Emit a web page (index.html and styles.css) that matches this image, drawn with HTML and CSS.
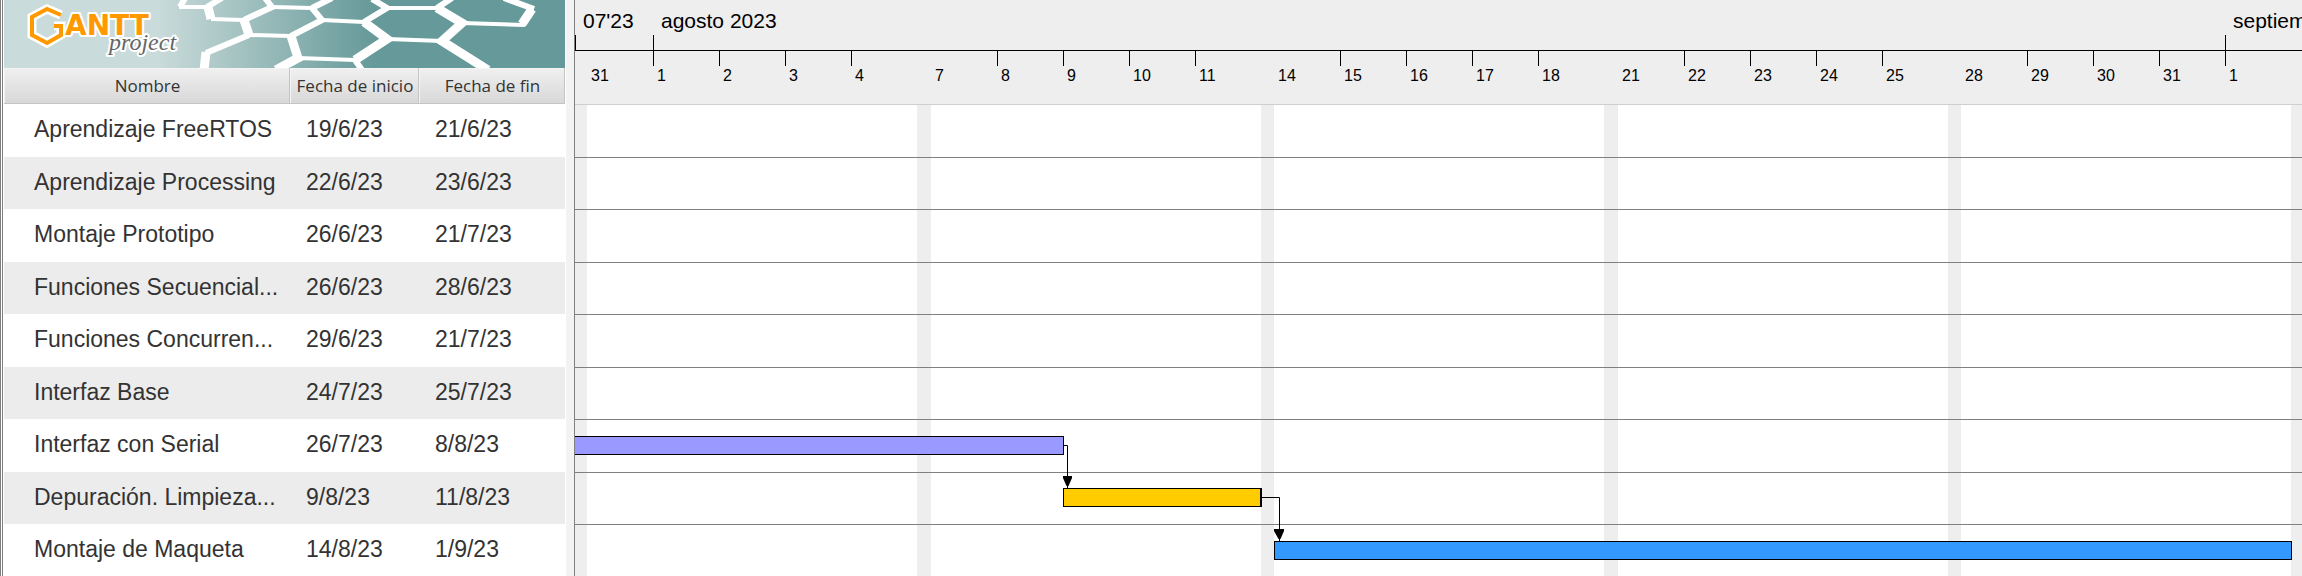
FILE: index.html
```html
<!DOCTYPE html>
<html lang="es">
<head>
<meta charset="utf-8">
<meta name="viewport" content="width=device-width, initial-scale=1">
<title>GanttProject</title>
<link rel="stylesheet" href="styles.css">
</head>
<body>
<main class="app">
  <section class="tasks">
    <svg class="banner" viewBox="4 0 561 68" preserveAspectRatio="xMinYMin slice" role="img" aria-label="GanttProject">
      <defs>
        <linearGradient id="sea" gradientUnits="userSpaceOnUse" x1="158" y1="0" x2="375" y2="0">
          <stop offset="0" stop-color="#c9dbda"/>
          <stop offset="1" stop-color="#669999"/>
        </linearGradient>
      </defs>
      <rect x="4" width="561" height="68" fill="url(#sea)"/>
      <g class="comb">
        <path class="comb-thin" d="M179 7H208M211 19L244 20M272 7L312 8M322 20L364 22M249 35L291 36M298 58L355 60M387 8H437M387 39L442 41M462 23L525 25"/>
        <path class="comb-mid" d="M185 -2L180 7M207 7L222 -2M244 20L272 7L265 -2M312 8L332 -2M291 36L322 20L312 8M206 53L249 35M355 60L362 70M372 -1L387 8L364 22M437 8L452 -2M534 9L504 -2"/>
        <path class="comb-thick" d="M208 7L211 19M244 20L249 35M206 52L204 70M291 36L298 58L276 70M355 60L387 39L364 22M437 8L462 23L442 41L488 70M522 24L532 9"/>
      </g>
      <path class="mark-halo" d="M61 15L47 9L32 17V35L47 43L61 35V26H54"/>
      <text class="brand" x="65" y="35">ANTT</text>
      <path class="mark" d="M61 15L47 9L32 17V35L47 43L61 35V26H54"/>
      <text class="brand-sub" x="109" y="50">project</text>
    </svg>
    <table class="grid">
      <colgroup><col class="col-name"><col class="col-start"><col class="col-end"></colgroup>
      <thead>
        <tr><th scope="col">Nombre</th><th scope="col">Fecha de inicio</th><th scope="col">Fecha de fin</th></tr>
      </thead>
      <tbody>
        <tr><td>Aprendizaje FreeRTOS</td><td>19/6/23</td><td>21/6/23</td></tr>
        <tr><td>Aprendizaje Processing</td><td>22/6/23</td><td>23/6/23</td></tr>
        <tr><td>Montaje Prototipo</td><td>26/6/23</td><td>21/7/23</td></tr>
        <tr><td>Funciones Secuencial...</td><td>26/6/23</td><td>28/6/23</td></tr>
        <tr><td>Funciones Concurren...</td><td>29/6/23</td><td>21/7/23</td></tr>
        <tr><td>Interfaz Base</td><td>24/7/23</td><td>25/7/23</td></tr>
        <tr><td>Interfaz con Serial</td><td>26/7/23</td><td>8/8/23</td></tr>
        <tr><td>Depuración. Limpieza...</td><td>9/8/23</td><td>11/8/23</td></tr>
        <tr><td>Montaje de Maqueta</td><td>14/8/23</td><td>1/9/23</td></tr>
      </tbody>
    </table>
  </section>
  <div class="splitter"></div>
  <section class="timeline">
    <header class="scale">
      <div class="months">
        <div class="month month-july"><span class="month-name">07'23</span><i class="month-tick"></i></div>
        <div class="month month-august"><span class="month-name">agosto 2023</span><i class="month-tick"></i></div>
        <div class="month"><span class="month-name">septiembre 2023</span><i class="month-tick"></i></div>
      </div>
      <div class="days">
        <span class="off off-first"></span>
        <span class="day monday">31</span><span class="day">1</span><span class="day">2</span><span class="day">3</span><span class="day">4</span>
        <span class="off off-long"></span>
        <span class="day monday">7</span><span class="day">8</span><span class="day">9</span><span class="day">10</span><span class="day">11</span>
        <span class="off"></span>
        <span class="day monday">14</span><span class="day">15</span><span class="day">16</span><span class="day">17</span><span class="day">18</span>
        <span class="off off-long"></span>
        <span class="day monday">21</span><span class="day">22</span><span class="day">23</span><span class="day">24</span><span class="day">25</span>
        <span class="off"></span>
        <span class="day monday">28</span><span class="day">29</span><span class="day">30</span><span class="day">31</span><span class="day">1</span>
      </div>
    </header>
    <div class="chart">
      <div class="weekends">
        <span class="off off-first"></span><span class="week"></span>
        <span class="off off-long"></span><span class="week"></span>
        <span class="off"></span><span class="week"></span>
        <span class="off off-long"></span><span class="week"></span>
        <span class="off"></span><span class="week"></span>
        <span class="off off-long"></span>
      </div>
      <div class="lanes">
        <div class="lane"></div>
        <div class="lane"></div>
        <div class="lane"></div>
        <div class="lane"></div>
        <div class="lane"></div>
        <div class="lane"></div>
        <div class="lane"><div class="bar bar-violet"></div></div>
        <div class="lane"><div class="bar bar-amber"></div></div>
        <div class="lane"><div class="bar bar-blue"></div></div>
      </div>
      <svg class="links" width="1727" height="473" viewBox="0 0 1727 473" aria-hidden="true">
        <path class="link" d="M489 341.500H492.500V384M687 393.500H704.500V437"/>
        <path class="arrow" d="M488 372H497V374L493.500 382H491.500L488 374ZM699 425H709V427L705.500 435H703.500L699 427Z"/>
      </svg>
    </div>
  </section>
</main>
</body>
</html>
```

FILE: styles.css
```css
* {
  box-sizing: border-box;
}

body {
  margin: 0;
  background: #fff;
  font-family: "Liberation Sans", Arial, sans-serif;
}

.app {
  display: flex;
  height: 100vh;
  overflow: hidden;
}

/* Task list */
.tasks {
  flex: none;
  width: 566px;
  padding: 0 1px;
  border-left: 3px double #808080;
}

.banner {
  display: block;
  width: 100%;
  height: 68px;
}

.comb {
  fill: none;
  stroke: #fff;
}

.comb-thin {
  stroke-width: 4;
}

.comb-mid {
  stroke-width: 6;
}

.comb-thick {
  stroke-width: 9;
}

.mark,
.mark-halo {
  fill: none;
  stroke: #f90;
  stroke-width: 4;
}

.mark-halo {
  stroke: #fff;
  stroke-width: 9;
}

.brand,
.brand-sub {
  paint-order: stroke;
  stroke: #fff;
  stroke-width: 4px;
  stroke-linejoin: round;
}

.brand {
  fill: #f90;
  font: bold 28px "DejaVu Sans", sans-serif;
}

.brand-sub {
  fill: #666;
  font: italic 24px "Liberation Serif", serif;
}

.grid {
  width: 100%;
  table-layout: fixed;
  border-collapse: separate;
  border-spacing: 0;
  color: #333;
}

.col-name {
  width: 286px;
}

.col-start {
  width: 129px;
}

.grid th {
  height: 36px;
  padding: 1px 0 0 2px;
  border: 1px solid #c4c4c4;
  border-width: 0 1px 1px 0;
  background: linear-gradient(#f0f0f0, #d8d8d8);
  box-shadow: inset 1px 1px #f4f4f4;
  font: 17px/34px "Open Sans", sans-serif;
  white-space: nowrap;
}

.grid td {
  height: 53px;
  padding: 0 0 3px 16px;
  font-size: 23px;
  line-height: 26px;
  white-space: nowrap;
}

.grid td:first-child {
  padding-left: 30px;
}

.grid tbody tr:nth-child(even) td {
  height: 52px;
  background: #ececec;
}

.splitter {
  flex: none;
  width: 9px;
  border-right: 1px solid #808080;
  background: #f3f3f3;
}

/* Timeline */
.timeline {
  flex: 1;
  min-width: 0;
  overflow: hidden;
}

.scale {
  height: 104px;
  background: #eee;
  color: #000;
}

.months {
  display: flex;
  height: 50px;
}

.month {
  flex: none;
  display: flex;
  flex-direction: column;
}

.month-july {
  width: 78px;
}

.month-august {
  width: 1572px;
}

.month-name {
  height: 35px;
  padding: 6px 0 0 8px;
  font-size: 21px;
  line-height: 29px;
  white-space: nowrap;
}

.month-tick {
  height: 15px;
  border-left: 1px solid #000;
}

.days {
  display: flex;
  border-top: 1px solid #000;
}

.day {
  flex: none;
  width: 66px;
  padding: 14px 0 0 4px;
  background: linear-gradient(#000, #000) 0 0 / 1px 15px no-repeat;
  font-size: 16px;
  line-height: 22px;
}

.monday {
  background: none;
}

.off {
  flex: none;
  width: 13px;
}

.off-long {
  width: 14px;
}

.off-first {
  width: 12px;
}

.chart {
  position: relative;
}

.weekends {
  position: absolute;
  inset: 0;
  display: flex;
}

.weekends .off {
  background: #eee;
}

.week {
  flex: none;
  width: 330px;
}

.lanes {
  position: relative;
}

.lane {
  height: 53px;
  padding-top: 16px;
  border-top: 1px solid #808080;
}

.lane:nth-child(even) {
  height: 52px;
  padding-top: 15px;
}

.lane:first-child {
  border-color: #cfcfcf;
}

.bar {
  height: 19px;
  border: 1px solid #000;
}

.bar-violet {
  width: 489px;
  border-left: 0;
  background: #99f;
}

.bar-amber {
  width: 199px;
  margin-left: 488px;
  border-right-width: 2px;
  background: #fc0;
}

.bar-blue {
  width: 1018px;
  margin-left: 699px;
  background: #39f;
}

.links {
  position: absolute;
  top: 0;
  left: 0;
}

.link {
  fill: none;
  stroke: #000;
}

.arrow {
  fill: #000;
}
```
